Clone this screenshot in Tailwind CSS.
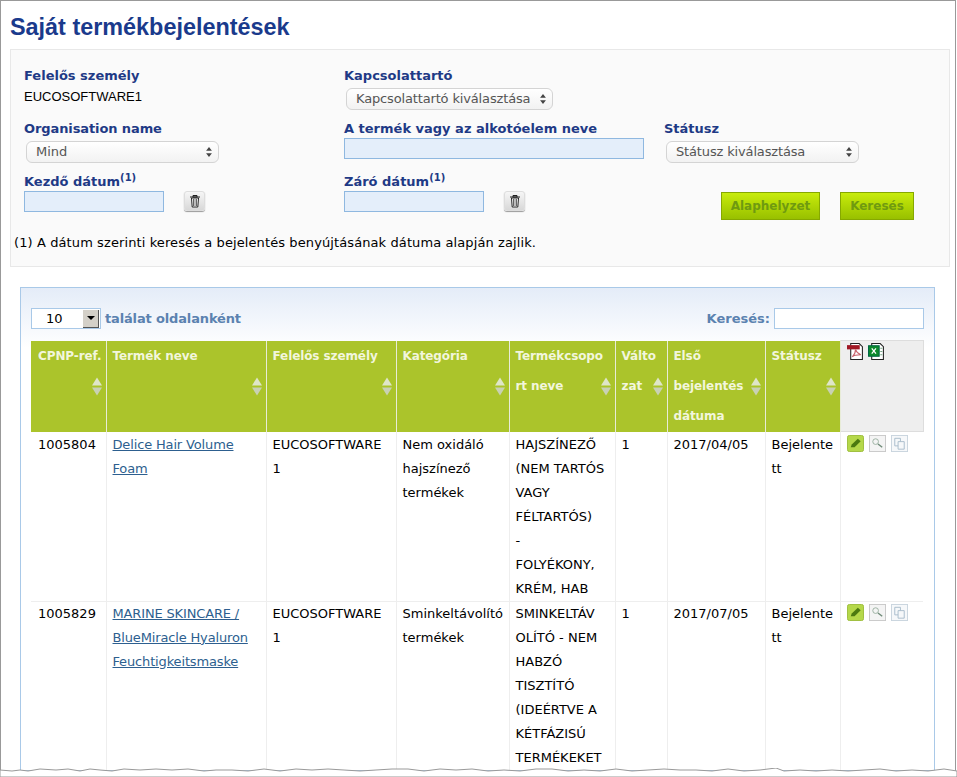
<!doctype html>
<html lang="hu">
<head>
<meta charset="utf-8">
<title>Saját termékbejelentések</title>
<script src="https://cdn.jsdelivr.net/npm/@tailwindcss/browser@4"></script>
</head>
<body class="bg-white">
<svg class="hidden">
  <symbol id="sort" viewBox="0 0 10 18"><path d="M5 0 10 8H0Z" fill="#dfe6c8"/><path d="M5 18 10 10H0Z" fill="#c9d1b4"/></symbol>
  <symbol id="trash" viewBox="0 0 12 14"><path d="M2.500 4h7l-.7 9H3.200Z" fill="#fff" stroke="#222"/><path d="M1 3h10M4 1.500h4V3H4Z" fill="#fff" stroke="#222"/><path d="M4.800 5v7M7.200 5v7" stroke="#222"/></symbol>
  <symbol id="updown" viewBox="0 0 7 12"><path d="M3.500 0 7 4.500H0ZM3.500 12 7 7.500H0Z" fill="#444"/></symbol>
  <symbol id="pencil" viewBox="0 0 18 18"><rect x=".5" y=".5" width="17" height="17" rx="2" fill="#b5d84a" stroke="#9cbc3a"/><path d="M4 13 5 10 11.500 4 14.500 6.500 8 13Z" fill="#4c7a10"/></symbol>
  <symbol id="zoom" viewBox="0 0 18 18"><rect x=".5" y=".5" width="17" height="17" fill="#f4f4f4" stroke="#c8c8c8"/><circle cx="7" cy="7" r="3" fill="none" stroke="#9ab0a0"/><path d="M9.500 9.500 14 13" stroke="#6f8a78" stroke-width="1.500"/></symbol>
  <symbol id="copy" viewBox="0 0 18 18"><rect x=".5" y=".5" width="17" height="17" fill="#f6f8fa" stroke="#c8d4de"/><path d="M4 3.500h6v8H4Z" fill="none" stroke="#a9bccb"/><path d="M7.500 7h6.500v8H7.500Z" fill="#f6f8fa" stroke="#a9bccb"/></symbol>
</svg>

<div class="relative h-[777px] w-[957px] overflow-hidden font-['DejaVu_Sans',sans-serif] text-[13px] text-black">
  <div class="h-[800px] w-[956px] border border-[#999] px-[9px]">
    <h1 class="pt-[12px] font-['Liberation_Sans',sans-serif] text-[23.400px] font-bold leading-[28px] text-[#1a3a8c]">Saját termékbejelentések</h1>

    <div class="mt-[8px] h-[218px] w-[940px] border border-[#e8e8e8] bg-[#fafafa] pl-[13px] pt-[17px]">
      <div class="grid grid-cols-[320px_320px_1fr] grid-rows-[53px_53px_54px]">
        <div>
          <div class="leading-[18px] font-bold text-[#1f3a86]">Felelős személy</div>
          <div class="mt-[3px] font-['Liberation_Sans',sans-serif] leading-[18px]">EUCOSOFTWARE1</div>
        </div>
        <div>
          <div class="leading-[18px] font-bold text-[#1f3a86]">Kapcsolattartó</div>
          <div class="mt-[3px] ml-[2px] flex h-[22px] w-[207px] items-center justify-between rounded-[6px] border border-[#d4d4d4] bg-gradient-to-b from-white to-[#f2f2f2] pl-[9px] pr-[6px] tracking-[-0.15px] text-[#555]">Kapcsolattartó kiválasztása<svg class="h-[10px] w-[6px]"><use href="#updown"/></svg></div>
        </div>
        <div></div>

        <div>
          <div class="leading-[18px] font-bold tracking-[-0.1px] text-[#1f3a86]">Organisation name</div>
          <div class="mt-[3px] ml-[2px] flex h-[22px] w-[193px] items-center justify-between rounded-[6px] border border-[#d4d4d4] bg-gradient-to-b from-white to-[#f2f2f2] pl-[9px] pr-[6px] text-[#555]">Mind<svg class="h-[10px] w-[6px]"><use href="#updown"/></svg></div>
        </div>
        <div>
          <div class="leading-[18px] font-bold text-[#1f3a86]">A termék vagy az alkotóelem neve</div>
          <div class="h-[21px] w-[300px] border border-[#8fb8e0] bg-[#e4eefa]"></div>
        </div>
        <div>
          <div class="leading-[18px] font-bold text-[#1f3a86]">Státusz</div>
          <div class="mt-[3px] ml-[2px] flex h-[22px] w-[193px] items-center justify-between rounded-[6px] border border-[#d4d4d4] bg-gradient-to-b from-white to-[#f2f2f2] pl-[9px] pr-[6px] tracking-[-0.15px] text-[#555]">Státusz kiválasztása<svg class="h-[10px] w-[6px]"><use href="#updown"/></svg></div>
        </div>

        <div>
          <div class="leading-[18px] font-bold text-[#1f3a86]">Kezdő dátum<sup class="text-[10px] leading-none">(1)</sup></div>
          <div class="flex items-start">
            <div class="h-[21px] w-[140px] border border-[#8fb8e0] bg-[#e4eefa]"></div>
            <div class="ml-[20px] flex h-[20px] w-[21px] items-center justify-center rounded-[3px] border border-[#ddd] bg-gradient-to-b from-[#f6f6f6] to-[#d8d8d8] shadow-[0_1px_1px_#999]"><svg class="h-[14px] w-[12px]"><use href="#trash"/></svg></div>
          </div>
        </div>
        <div>
          <div class="leading-[18px] font-bold text-[#1f3a86]">Záró dátum<sup class="text-[10px] leading-none">(1)</sup></div>
          <div class="flex items-start">
            <div class="h-[21px] w-[140px] border border-[#8fb8e0] bg-[#e4eefa]"></div>
            <div class="ml-[20px] flex h-[20px] w-[21px] items-center justify-center rounded-[3px] border border-[#ddd] bg-gradient-to-b from-[#f6f6f6] to-[#d8d8d8] shadow-[0_1px_1px_#999]"><svg class="h-[14px] w-[12px]"><use href="#trash"/></svg></div>
          </div>
        </div>
        <div class="flex items-start gap-[20px] pl-[57px] pt-[19px] text-[12px] font-bold text-[#6f9a10]">
          <div class="flex h-[28px] w-[99px] items-center justify-center border border-[#86a800] bg-gradient-to-b from-[#c8ec0c] to-[#98c000]">Alaphelyzet</div>
          <div class="flex h-[28px] w-[74px] items-center justify-center border border-[#86a800] bg-gradient-to-b from-[#c8ec0c] to-[#98c000]">Keresés</div>
        </div>
      </div>
      <p class="-ml-[10px] mt-[7px] leading-[18px] tracking-[0.1px]">(1) A dátum szerinti keresés a bejelentés benyújtásának dátuma alapján zajlik.</p>
    </div>

    <div class="ml-[10px] mt-[20px] w-[915px] border border-[#a9c9e8] bg-gradient-to-b from-[#e4ecf8] via-white via-[60px] to-white px-[10px] pt-[20px]">
      <div class="flex h-[32px] items-start justify-between">
        <div class="flex items-center font-bold text-[#5b82b0]">
          <div class="flex h-[21px] w-[70px] items-center justify-between border border-[#a9c9e8] bg-white pl-[14px] font-normal text-black">10
            <span class="mr-px flex h-[18px] w-[16px] items-center justify-center border-r border-b border-[#555] bg-[#d4d0c8]"><span class="border-x-[4px] border-t-[4px] border-x-transparent border-t-black"></span></span>
          </div>
          <span class="ml-[4px] tracking-[-0.15px]">találat oldalanként</span>
        </div>
        <div class="flex items-center font-bold text-[#5b82b0]">
          <span>Keresés:</span>
          <div class="ml-[4px] h-[21px] w-[150px] border border-[#a9c9e8] bg-white"></div>
        </div>
      </div>

      <table class="w-[892px] table-fixed border-collapse">
        <colgroup>
          <col class="w-[75px]"><col class="w-[160px]"><col class="w-[130px]"><col class="w-[113px]"><col class="w-[106px]"><col class="w-[52px]"><col class="w-[98px]"><col class="w-[75px]"><col class="w-[83px]">
        </colgroup>
        <thead>
          <tr class="h-[91px] text-left align-top text-[12px] font-bold leading-[30px] tracking-[-0.1px] text-[#f2f6dc]">
            <th class="relative border-r border-[#e8ecd8] bg-[#abc42b] pl-[7px]">CPNP-ref.<svg class="absolute right-[4px] top-[36px] h-[19px] w-[10px]"><use href="#sort"/></svg></th>
            <th class="relative border-r border-[#e8ecd8] bg-[#abc42b] pl-[6px]">Termék neve<svg class="absolute right-[4px] top-[36px] h-[19px] w-[10px]"><use href="#sort"/></svg></th>
            <th class="relative border-r border-[#e8ecd8] bg-[#abc42b] pl-[6px]">Felelős személy<svg class="absolute right-[4px] top-[36px] h-[19px] w-[10px]"><use href="#sort"/></svg></th>
            <th class="relative border-r border-[#e8ecd8] bg-[#abc42b] pl-[6px]">Kategória<svg class="absolute right-[4px] top-[36px] h-[19px] w-[10px]"><use href="#sort"/></svg></th>
            <th class="relative border-r border-[#e8ecd8] bg-[#abc42b] pl-[6px]">Termékcsopo<br>rt neve<svg class="absolute right-[4px] top-[36px] h-[19px] w-[10px]"><use href="#sort"/></svg></th>
            <th class="relative border-r border-[#e8ecd8] bg-[#abc42b] pl-[6px]">Válto<br>zat<svg class="absolute right-[4px] top-[36px] h-[19px] w-[10px]"><use href="#sort"/></svg></th>
            <th class="relative border-r border-[#e8ecd8] bg-[#abc42b] pl-[6px]">Első<br>bejelentés<br>dátuma<svg class="absolute right-[4px] top-[36px] h-[19px] w-[10px]"><use href="#sort"/></svg></th>
            <th class="relative border-r border-[#e8ecd8] bg-[#abc42b] pl-[6px]">Státusz<svg class="absolute right-[4px] top-[36px] h-[19px] w-[10px]"><use href="#sort"/></svg></th>
            <th class="border border-[#ddd] bg-[#eeeeee] pl-[6px] pt-[2px]">
              <div class="flex gap-[4px]">
                <svg class="h-[17px] w-[17px]" viewBox="0 0 16 16"><path d="M3.500.5h8l3 3v12h-11Z" fill="#fff" stroke="#222"/><path d="M0 2h12v4H0Z" fill="#a01824"/><path d="M5 13c2-2 3-5 3-7 1 3 2 4 5 5-3 0-6 0-8 2Z" fill="none" stroke="#c8626c"/></svg>
                <svg class="h-[17px] w-[17px]" viewBox="0 0 16 16"><path d="M3.500.5h8l3 3v12h-11Z" fill="#fff" stroke="#222"/><path d="M.5 2.500h10v10H.5Z" fill="#0c8a2c" stroke="#064"/><path d="M3.500 5 7.500 10M7.500 5l-4 5" stroke="#fff" stroke-width="1.200"/><path d="M11.500 5h2M11.500 8h2M11.500 11h2" stroke="#78a888"/></svg>
              </div>
            </th>
          </tr>
        </thead>
        <tbody class="align-top leading-[24px]">
          <tr class="border-b border-[#eee]">
            <td class="border-r border-[#eee] pl-[7px] pt-px">1005804</td>
            <td class="border-r border-[#eee] pl-[6px] pt-px"><a href="#" class="tracking-[-0.15px] text-[#2d5f8f] underline">Delice Hair Volume Foam</a></td>
            <td class="border-r border-[#eee] pl-[6px] pt-px">EUCOSOFTWARE<br>1</td>
            <td class="border-r border-[#eee] pl-[6px] pt-px">Nem oxidáló<br>hajszínező<br>termékek</td>
            <td class="border-r border-[#eee] pl-[6px] pt-px">HAJSZÍNEZŐ<br>(NEM TARTÓS<br>VAGY<br>FÉLTARTÓS)<br>-<br>FOLYÉKONY,<br>KRÉM, HAB</td>
            <td class="border-r border-[#eee] pl-[6px] pt-px">1</td>
            <td class="border-r border-[#eee] pl-[6px] pt-px">2017/04/05</td>
            <td class="border-r border-[#eee] pl-[6px] pt-px">Bejelente<br>tt</td>
            <td class="pl-[6px] pt-[3px]"><div class="flex gap-[5px]"><svg class="h-[17px] w-[17px]"><use href="#pencil"/></svg><svg class="h-[17px] w-[17px]"><use href="#zoom"/></svg><svg class="h-[17px] w-[17px]"><use href="#copy"/></svg></div></td>
          </tr>
          <tr>
            <td class="border-r border-[#eee] pl-[7px]">1005829</td>
            <td class="border-r border-[#eee] pl-[6px]"><a href="#" class="tracking-[-0.15px] text-[#2d5f8f] underline">MARINE SKINCARE / BlueMiracle Hyaluron Feuchtigkeitsmaske</a></td>
            <td class="border-r border-[#eee] pl-[6px]">EUCOSOFTWARE<br>1</td>
            <td class="border-r border-[#eee] pl-[6px]">Sminkeltávolító<br>termékek</td>
            <td class="border-r border-[#eee] pl-[6px]">SMINKELTÁV<br>OLÍTÓ - NEM<br>HABZÓ<br>TISZTÍTÓ<br>(IDEÉRTVE A<br>KÉTFÁZISÚ<br>TERMÉKEKET</td>
            <td class="border-r border-[#eee] pl-[6px]">1</td>
            <td class="border-r border-[#eee] pl-[6px]">2017/07/05</td>
            <td class="border-r border-[#eee] pl-[6px]">Bejelente<br>tt</td>
            <td class="pl-[6px] pt-[2px]"><div class="flex gap-[5px]"><svg class="h-[17px] w-[17px]"><use href="#pencil"/></svg><svg class="h-[17px] w-[17px]"><use href="#zoom"/></svg><svg class="h-[17px] w-[17px]"><use href="#copy"/></svg></div></td>
          </tr>
        </tbody>
      </table>
    </div>
  </div>

  <!-- torn screenshot edge along the bottom -->
  <svg class="absolute bottom-0 left-0 h-[9px] w-[957px]" viewBox="0 0 957 9">
    <path d="M0 2 12 3 20 2 28 3 40 1 56 2 68 1 80 3 90 1 100 2 112 3 124 1 140 2 156 1 172 2 188 1 204 3 216 2 232 2 248 3 264 1 280 3 296 1 312 2 328 1 344 2 360 3 376 2 392 1 408 1 424 3 440 1 456 2 472 1 488 3 504 2 520 3 536 1 552 1 568 3 584 2 600 3 616 1 632 3 648 2 664 1 680 2 696 2 712 3 728 1 744 3 760 2 776 0 784 3 800 2 816 3 832 2 848 3 864 2 880 1 896 3 912 2 928 3 944 1 957 3V9H0Z" fill="#fff" stroke="#999"/>
  </svg>
</div>
</body>
</html>
